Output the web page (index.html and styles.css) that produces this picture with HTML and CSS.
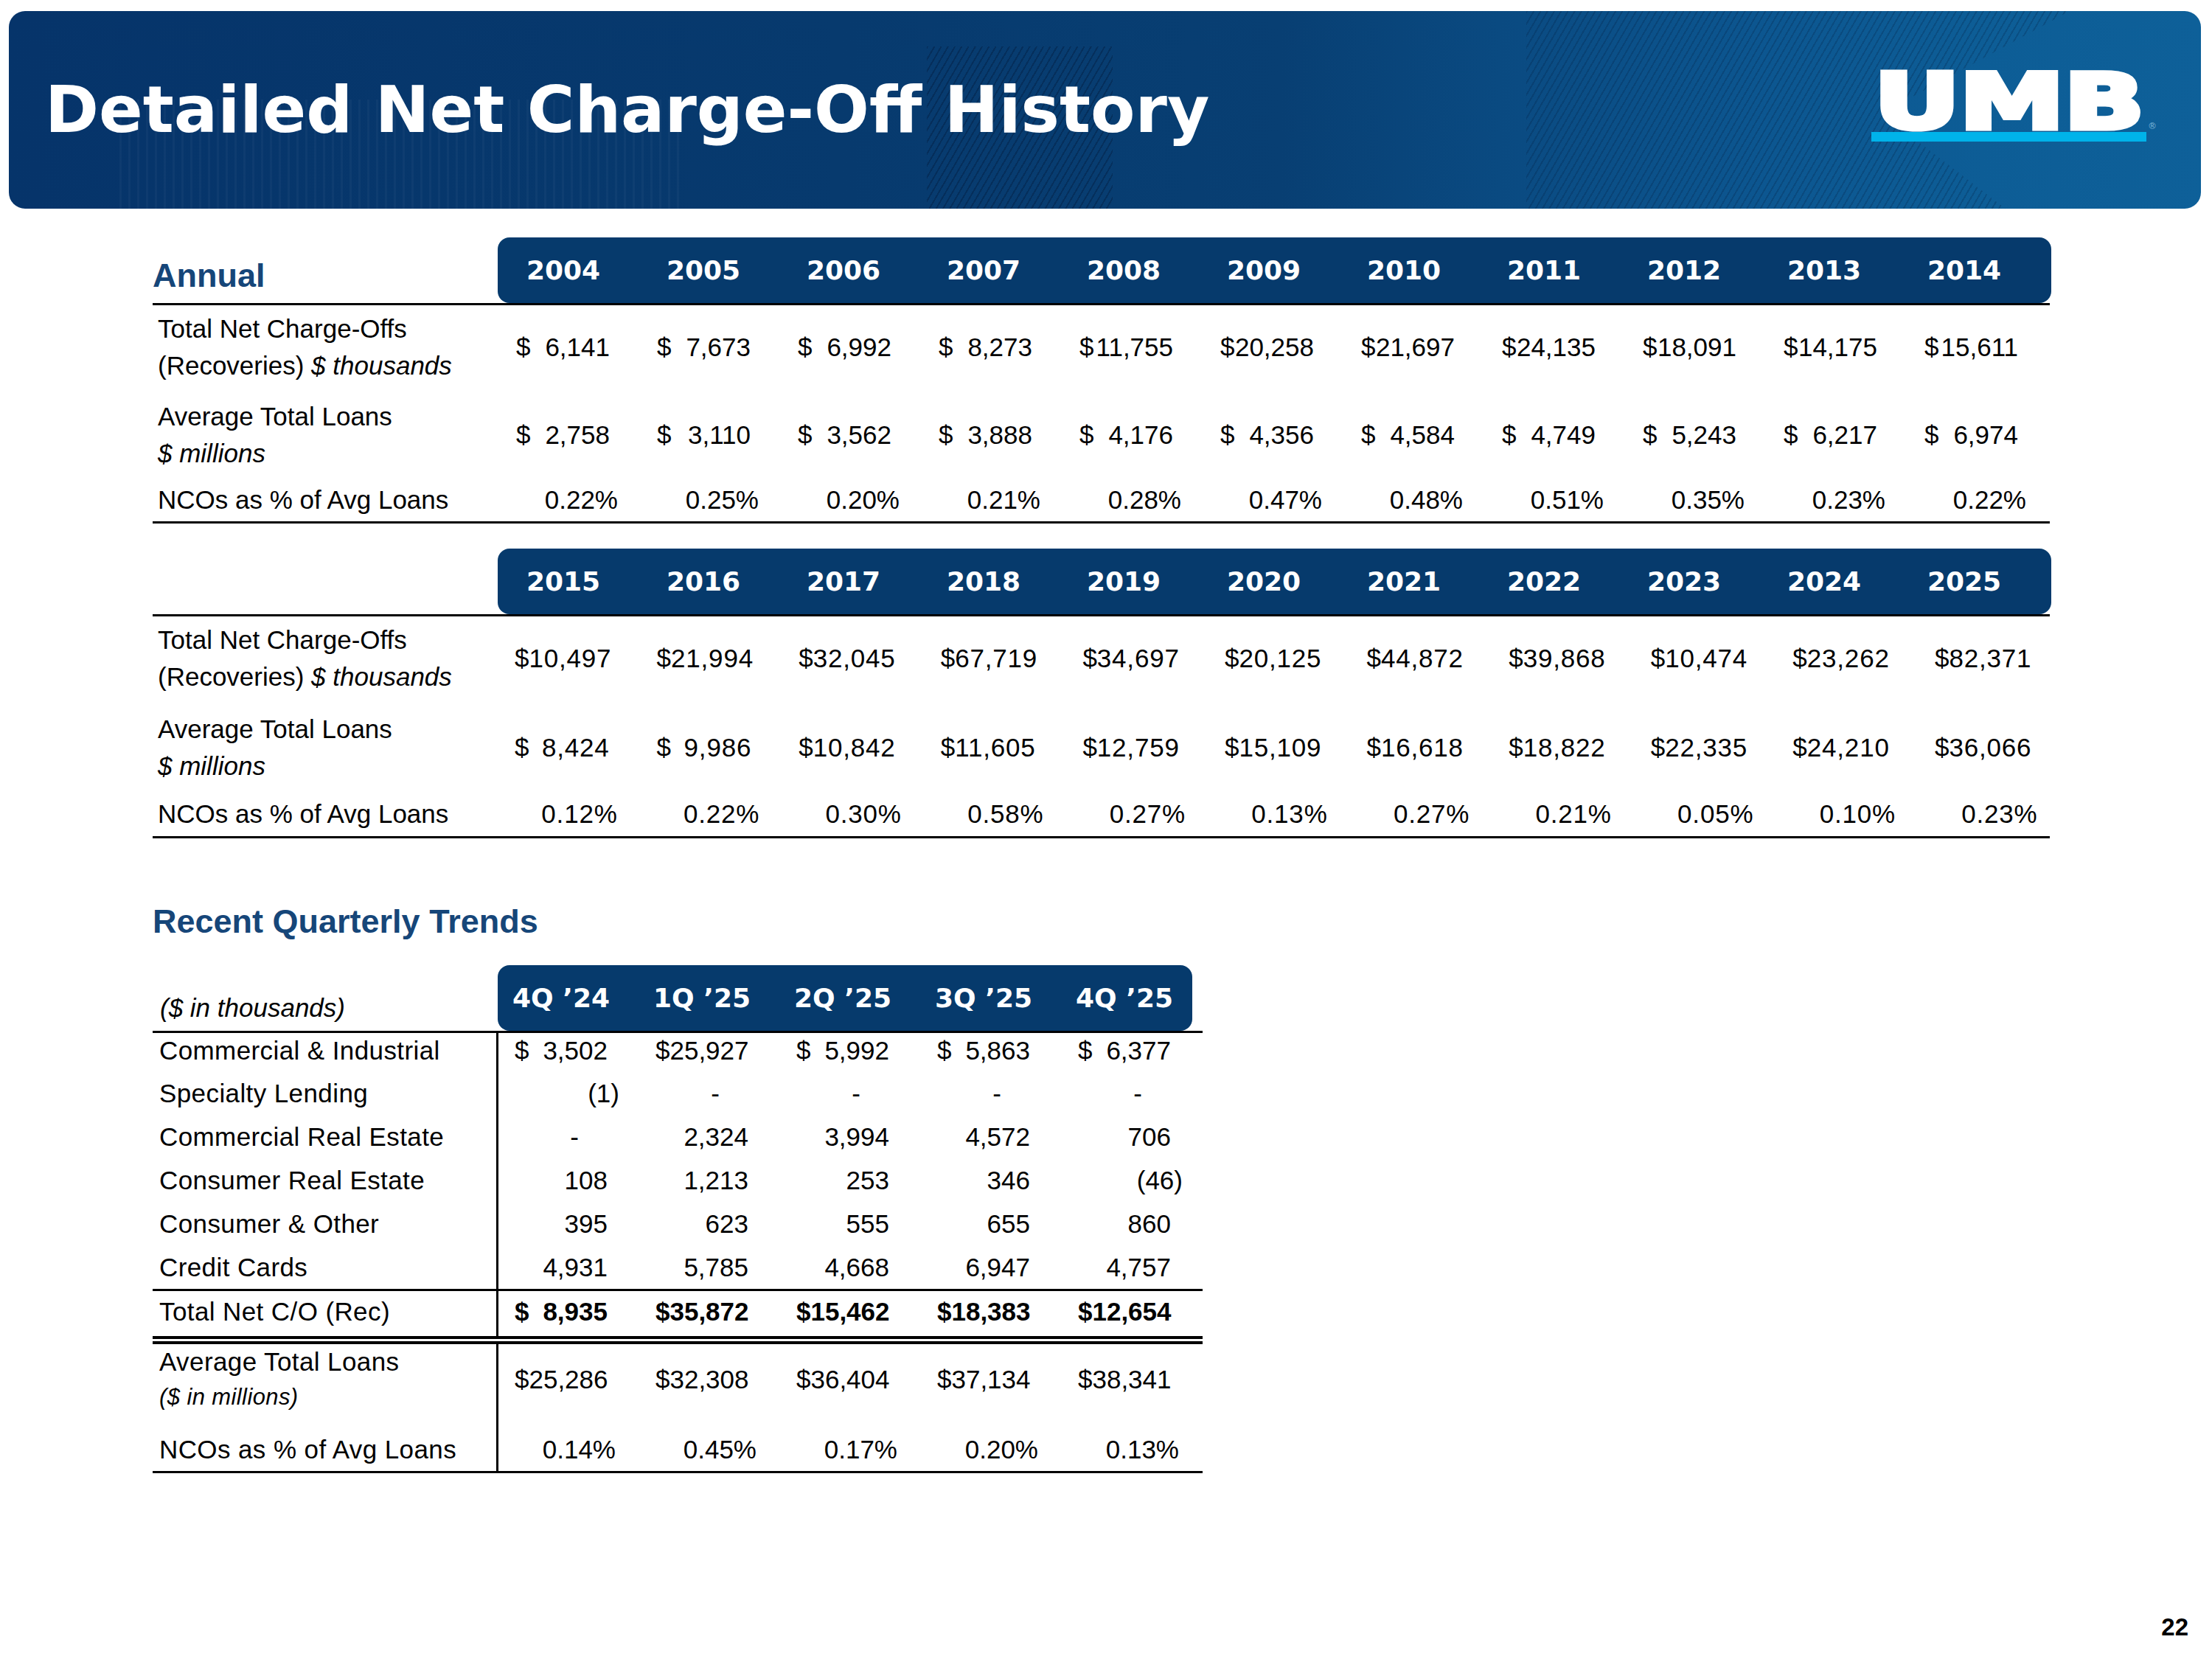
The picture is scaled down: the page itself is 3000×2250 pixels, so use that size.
FILE: index.html
```html
<!DOCTYPE html>
<html lang="en">
<head>
<meta charset="utf-8">
<title>Detailed Net Charge-Off History</title>
<link rel="stylesheet" href="styles.css">
</head>
<body>
<header class="banner">
  <div class="tex tex-v"></div>
  <div class="tex tex-a"></div>
  <div class="tex tex-b"></div>
  <h1 class="title">Detailed Net Charge-Off History</h1>
  <svg class="logo" width="392" height="130" viewBox="0 0 392 130">
    <text x="4" y="105" font-family="DejaVu Sans" font-weight="bold" font-size="104" textLength="366" lengthAdjust="spacingAndGlyphs" fill="#ffffff" stroke="#ffffff" stroke-width="7" stroke-linejoin="miter">UMB</text>
    <rect x="0" y="110" width="373" height="13" fill="#00b3ea"/>
    <text x="375" y="106" font-family="DejaVu Sans" font-size="12" fill="#7fb6d9">®</text>
  </svg>
</header>

<section class="tbl tbl1">
  <div class="thead">
    <div class="sec-label">Annual</div>
    <div class="bar">
      <span>2004</span><span>2005</span><span>2006</span><span>2007</span><span>2008</span><span>2009</span><span>2010</span><span>2011</span><span>2012</span><span>2013</span><span>2014</span>
    </div>
  </div>
  <div class="row r1">
    <div class="lab"><span class="t">Total Net Charge-Offs<br>(Recoveries) <i>$ thousands</i></span></div>
    <div class="v"><span>$</span><span>6,141</span></div>
    <div class="v"><span>$</span><span>7,673</span></div>
    <div class="v"><span>$</span><span>6,992</span></div>
    <div class="v"><span>$</span><span>8,273</span></div>
    <div class="v"><span>$</span><span>11,755</span></div>
    <div class="v"><span>$</span><span>20,258</span></div>
    <div class="v"><span>$</span><span>21,697</span></div>
    <div class="v"><span>$</span><span>24,135</span></div>
    <div class="v"><span>$</span><span>18,091</span></div>
    <div class="v"><span>$</span><span>14,175</span></div>
    <div class="v"><span>$</span><span>15,611</span></div>
  </div>
  <div class="row r2">
    <div class="lab"><span class="t">Average Total Loans<br><i>$ millions</i></span></div>
    <div class="v"><span>$</span><span>2,758</span></div>
    <div class="v"><span>$</span><span>3,110</span></div>
    <div class="v"><span>$</span><span>3,562</span></div>
    <div class="v"><span>$</span><span>3,888</span></div>
    <div class="v"><span>$</span><span>4,176</span></div>
    <div class="v"><span>$</span><span>4,356</span></div>
    <div class="v"><span>$</span><span>4,584</span></div>
    <div class="v"><span>$</span><span>4,749</span></div>
    <div class="v"><span>$</span><span>5,243</span></div>
    <div class="v"><span>$</span><span>6,217</span></div>
    <div class="v"><span>$</span><span>6,974</span></div>
  </div>
  <div class="row r3">
    <div class="lab"><span class="t">NCOs as % of Avg Loans</span></div>
    <div class="p">0.22%</div>
    <div class="p">0.25%</div>
    <div class="p">0.20%</div>
    <div class="p">0.21%</div>
    <div class="p">0.28%</div>
    <div class="p">0.47%</div>
    <div class="p">0.48%</div>
    <div class="p">0.51%</div>
    <div class="p">0.35%</div>
    <div class="p">0.23%</div>
    <div class="p">0.22%</div>
  </div>
</section>

<section class="tbl tbl2">
  <div class="thead">
    <div class="sec-label"></div>
    <div class="bar">
      <span>2015</span><span>2016</span><span>2017</span><span>2018</span><span>2019</span><span>2020</span><span>2021</span><span>2022</span><span>2023</span><span>2024</span><span>2025</span>
    </div>
  </div>
  <div class="row r1 wide">
    <div class="lab"><span class="t">Total Net Charge-Offs<br>(Recoveries) <i>$ thousands</i></span></div>
    <div class="v"><span>$</span><span>10,497</span></div>
    <div class="v"><span>$</span><span>21,994</span></div>
    <div class="v"><span>$</span><span>32,045</span></div>
    <div class="v"><span>$</span><span>67,719</span></div>
    <div class="v"><span>$</span><span>34,697</span></div>
    <div class="v"><span>$</span><span>20,125</span></div>
    <div class="v"><span>$</span><span>44,872</span></div>
    <div class="v"><span>$</span><span>39,868</span></div>
    <div class="v"><span>$</span><span>10,474</span></div>
    <div class="v"><span>$</span><span>23,262</span></div>
    <div class="v"><span>$</span><span>82,371</span></div>
  </div>
  <div class="row r2b wide">
    <div class="lab"><span class="t">Average Total Loans<br><i>$ millions</i></span></div>
    <div class="v"><span>$</span><span>8,424</span></div>
    <div class="v"><span>$</span><span>9,986</span></div>
    <div class="v"><span>$</span><span>10,842</span></div>
    <div class="v"><span>$</span><span>11,605</span></div>
    <div class="v"><span>$</span><span>12,759</span></div>
    <div class="v"><span>$</span><span>15,109</span></div>
    <div class="v"><span>$</span><span>16,618</span></div>
    <div class="v"><span>$</span><span>18,822</span></div>
    <div class="v"><span>$</span><span>22,335</span></div>
    <div class="v"><span>$</span><span>24,210</span></div>
    <div class="v"><span>$</span><span>36,066</span></div>
  </div>
  <div class="row r3b wide">
    <div class="lab"><span class="t">NCOs as % of Avg Loans</span></div>
    <div class="p">0.12%</div>
    <div class="p">0.22%</div>
    <div class="p">0.30%</div>
    <div class="p">0.58%</div>
    <div class="p">0.27%</div>
    <div class="p">0.13%</div>
    <div class="p">0.27%</div>
    <div class="p">0.21%</div>
    <div class="p">0.05%</div>
    <div class="p">0.10%</div>
    <div class="p">0.23%</div>
  </div>
</section>

<h2 class="qtitle">Recent Quarterly Trends</h2>

<section class="qt">
  <div class="qhead">
    <div class="qlab">($ in thousands)</div>
    <div class="qbar">
      <span>4Q ’24</span><span>1Q ’25</span><span>2Q ’25</span><span>3Q ’25</span><span>4Q ’25</span>
    </div>
  </div>
  <div class="qrow h52">
    <div class="ql">Commercial &amp; Industrial</div>
    <div class="qv"><span>$</span><span>3,502</span></div>
    <div class="qv"><span>$</span><span>25,927</span></div>
    <div class="qv"><span>$</span><span>5,992</span></div>
    <div class="qv"><span>$</span><span>5,863</span></div>
    <div class="qv"><span>$</span><span>6,377</span></div>
  </div>
  <div class="qrow h59">
    <div class="ql">Specialty Lending</div>
    <div class="qneg">(1)</div>
    <div class="qd">-</div>
    <div class="qd">-</div>
    <div class="qd">-</div>
    <div class="qd">-</div>
  </div>
  <div class="qrow h59">
    <div class="ql">Commercial Real Estate</div>
    <div class="qd">-</div>
    <div class="qn">2,324</div>
    <div class="qn">3,994</div>
    <div class="qn">4,572</div>
    <div class="qn">706</div>
  </div>
  <div class="qrow h59">
    <div class="ql">Consumer Real Estate</div>
    <div class="qn">108</div>
    <div class="qn">1,213</div>
    <div class="qn">253</div>
    <div class="qn">346</div>
    <div class="qneg">(46)</div>
  </div>
  <div class="qrow h59">
    <div class="ql">Consumer &amp; Other</div>
    <div class="qn">395</div>
    <div class="qn">623</div>
    <div class="qn">555</div>
    <div class="qn">655</div>
    <div class="qn">860</div>
  </div>
  <div class="qrow hlast">
    <div class="ql">Credit Cards</div>
    <div class="qn">4,931</div>
    <div class="qn">5,785</div>
    <div class="qn">4,668</div>
    <div class="qn">6,947</div>
    <div class="qn">4,757</div>
  </div>
  <div class="qrow htotal">
    <div class="ql">Total Net C/O (Rec)</div>
    <div class="qv b"><span>$</span><span>8,935</span></div>
    <div class="qv b"><span>$</span><span>35,872</span></div>
    <div class="qv b"><span>$</span><span>15,462</span></div>
    <div class="qv b"><span>$</span><span>18,383</span></div>
    <div class="qv b"><span>$</span><span>12,654</span></div>
  </div>
  <div class="qrow havg">
    <div class="ql"><span class="t">Average Total Loans<br><i class="sm">($ in millions)</i></span></div>
    <div class="qv"><span>$</span><span>25,286</span></div>
    <div class="qv"><span>$</span><span>32,308</span></div>
    <div class="qv"><span>$</span><span>36,404</span></div>
    <div class="qv"><span>$</span><span>37,134</span></div>
    <div class="qv"><span>$</span><span>38,341</span></div>
  </div>
  <div class="qrow hnco">
    <div class="ql">NCOs as % of Avg Loans</div>
    <div class="qp">0.14%</div>
    <div class="qp">0.45%</div>
    <div class="qp">0.17%</div>
    <div class="qp">0.20%</div>
    <div class="qp">0.13%</div>
  </div>
</section>

<footer class="pnum">22</footer>
</body>
</html>
```

FILE: styles.css
```css
* { box-sizing: border-box; }

html, body {
  margin: 0;
  padding: 0;
  background: #ffffff;
}

body {
  width: 3000px;
  height: 2250px;
  font-family: "Liberation Sans", Arial, sans-serif;
  color: #000000;
  overflow: hidden;
}

/* ---------- banner ---------- */
.banner {
  position: relative;
  overflow: hidden;
  margin: 15px 0 0 12px;
  width: 2973px;
  height: 268px;
  border-radius: 22px;
  background: linear-gradient(90deg, #06346a 0%, #073a6e 38%, #083f73 58%, #0a4a81 68%, #0c5690 80%, #0d5d96 90%, #0e6099 100%);
  display: flex;
  align-items: center;
  justify-content: space-between;
  padding: 0 55px 0 49px;
}

.tex {
  position: absolute;
  pointer-events: none;
}

.tex-v {
  left: 150px;
  top: 120px;
  width: 760px;
  height: 148px;
  background: repeating-linear-gradient(90deg, rgba(255,255,255,0.03) 0 3px, transparent 3px 12px);
}

.tex-a {
  left: 1245px;
  top: 48px;
  width: 252px;
  height: 220px;
  background: repeating-linear-gradient(120deg, rgba(0,16,44,0.30) 0 2px, transparent 2px 8px);
}

.tex-b {
  left: 2058px;
  top: 0;
  width: 760px;
  height: 268px;
  clip-path: polygon(0 0, 737px 0, 482px 139px, 650px 268px, 0 268px);
  background: repeating-linear-gradient(120deg, rgba(0,20,50,0.20) 0 2px, transparent 2px 8px);
}

.title {
  position: relative;
  z-index: 1;
  margin: 0;
  font-family: "DejaVu Sans", sans-serif;
  font-weight: bold;
  font-size: 88px;
  line-height: 102px;
  color: #ffffff;
  white-space: nowrap;
}

.logo {
  position: relative;
  z-index: 1;
  display: block;
  flex-shrink: 0;
  align-self: flex-start;
  margin-top: 54px;
}

/* ---------- annual tables ---------- */
.tbl {
  margin-left: 207px;
  width: 2573px;
}

.tbl1 { margin-top: 39px; }
.tbl2 { margin-top: 34px; }

.thead {
  display: flex;
  height: 92px;
  border-bottom: 3px solid #000000;
}

.sec-label {
  width: 468px;
  flex-shrink: 0;
  align-self: flex-end;
  padding: 0 0 15px 0;
  font-weight: bold;
  font-size: 45px;
  line-height: 45px;
  color: #164679;
}

.bar {
  flex-shrink: 0;
  width: 2107px;
  height: 89px;
  background: #063a6c;
  border-radius: 16px;
  display: grid;
  grid-template-columns: repeat(11, 190px);
  align-items: center;
  padding-right: 17px;
}

.bar span,
.qbar span {
  text-align: center;
  color: #ffffff;
  font-family: "DejaVu Sans", sans-serif;
  font-weight: bold;
  font-size: 36px;
  white-space: nowrap;
}

.bar span { padding-right: 12px; }

.row {
  display: grid;
  grid-template-columns: 462px repeat(11, 191px) 1fr;
  font-size: 35px;
  line-height: 50px;
}

.row.wide {
  grid-template-columns: 460px repeat(11, 192.6px);
}

.row > div {
  display: flex;
  align-items: center;
  white-space: nowrap;
}

.r1 { height: 118px; }
.r1 > div { padding-bottom: 5px; }
.r2 { height: 116px; }
.r3 { height: 62px; border-bottom: 3px solid #000000; }
.r2b { height: 120px; }
.r3b { height: 63px; border-bottom: 3px solid #000000; }

.lab { padding-left: 7px; }
.t { display: block; }

.v {
  justify-content: space-between;
  padding: 0 33px 0 31px;
}

.p {
  justify-content: flex-end;
  padding-right: 22px;
}

.wide .v span:last-child,
.wide .p { letter-spacing: 0.8px; }

/* ---------- quarterly ---------- */
.qtitle {
  margin: 87px 0 0 207px;
  font-weight: bold;
  font-size: 45px;
  line-height: 52px;
  color: #164679;
}

.qt {
  margin: 33px 0 0 207px;
  width: 1424px;
}

.qhead {
  display: flex;
  height: 92px;
  border-bottom: 3px solid #000000;
}

.qlab {
  width: 468px;
  flex-shrink: 0;
  align-self: flex-end;
  padding: 0 0 11px 10px;
  font-style: italic;
  font-size: 35px;
  line-height: 40px;
}

.qbar {
  flex-shrink: 0;
  width: 942px;
  height: 89px;
  background: #063a6c;
  border-radius: 16px;
  display: grid;
  grid-template-columns: repeat(5, 191px);
  align-items: center;
}

.qbar span { padding-right: 19px; }

.qrow {
  display: grid;
  grid-template-columns: 469px repeat(5, 191px);
  font-size: 35px;
  line-height: 46px;
}

.qrow > div {
  display: flex;
  align-items: center;
  white-space: nowrap;
}

.qrow > .ql {
  border-right: 3px solid #000000;
  padding-left: 9px;
  letter-spacing: 0.4px;
}

.qv { justify-content: space-between; padding: 0 43px 0 22px; }
.qn { justify-content: flex-end; padding-right: 43px; }
.qneg { justify-content: flex-end; padding-right: 27px; }
.qd { justify-content: flex-end; padding-right: 82px; }
.qp { justify-content: flex-end; padding-right: 32px; }
.b { font-weight: bold; }

.h52 { height: 52px; }
.h52 > div { padding-bottom: 5px; }
.h59 { height: 59px; }
.hlast { height: 62px; border-bottom: 3px solid #000000; }
.htotal { height: 72px; border-bottom: 11px double #000000; }
.htotal > div { padding-bottom: 5px; }
.havg { height: 114px; }
.havg > div { padding-bottom: 18px; }
.hnco { height: 61px; border-bottom: 3px solid #000000; }

.sm { font-size: 31px; }

/* ---------- footer ---------- */
.pnum {
  margin-top: 189px;
  padding-right: 32px;
  text-align: right;
  font-weight: bold;
  font-size: 33px;
  line-height: 40px;
}
```
